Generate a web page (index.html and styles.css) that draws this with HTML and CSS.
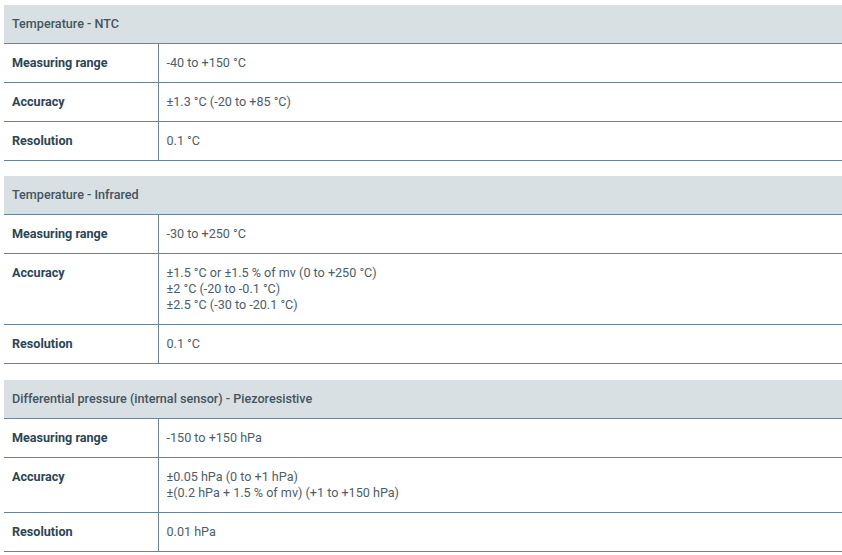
FILE: index.html
```html
<!DOCTYPE html>
<html>
<head>
<meta charset="utf-8">
<link rel="stylesheet" href="styles.css">
</head>
<body>
<div class="specs">
  <table class="spec">
    <colgroup><col class="col-label"><col class="col-value"></colgroup>
    <tr><th class="head" colspan="2">Temperature - NTC</th></tr>
    <tr><td class="label">Measuring range</td><td class="value">-40 to +150 °C</td></tr>
    <tr><td class="label">Accuracy</td><td class="value">±1.3 °C (-20 to +85 °C)</td></tr>
    <tr><td class="label">Resolution</td><td class="value">0.1 °C</td></tr>
  </table>
  <table class="spec">
    <colgroup><col class="col-label"><col class="col-value"></colgroup>
    <tr><th class="head" colspan="2">Temperature - Infrared</th></tr>
    <tr><td class="label">Measuring range</td><td class="value">-30 to +250 °C</td></tr>
    <tr><td class="label">Accuracy</td><td class="value">±1.5 °C or ±1.5 % of mv (0 to +250 °C)<br>±2 °C (-20 to -0.1 °C)<br>±2.5 °C (-30 to -20.1 °C)</td></tr>
    <tr><td class="label">Resolution</td><td class="value">0.1 °C</td></tr>
  </table>
  <table class="spec">
    <colgroup><col class="col-label"><col class="col-value"></colgroup>
    <tr><th class="head" colspan="2">Differential pressure (internal sensor) - Piezoresistive</th></tr>
    <tr><td class="label">Measuring range</td><td class="value">-150 to +150 hPa</td></tr>
    <tr><td class="label">Accuracy</td><td class="value">±0.05 hPa (0 to +1 hPa)<br>±(0.2 hPa + 1.5 % of mv) (+1 to +150 hPa)</td></tr>
    <tr><td class="label">Resolution</td><td class="value">0.01 hPa</td></tr>
  </table>
</div>
</body>
</html>
```
FILE: styles.css
```css
html, body {
  margin: 0;
  padding: 0;
  background: #ffffff;
}
body {
  font-family: Roboto, "Liberation Sans", sans-serif;
  font-size: 12.6px;
  line-height: 16px;
}
.specs {
  padding: 5px 0 0 4px;
  display: flex;
  flex-direction: column;
  gap: 15.4px;
}
.spec {
  width: 838px;
  border-collapse: collapse;
  table-layout: fixed;
}
.col-label {
  width: 154px;
}
.spec td, .spec th {
  border-bottom: 1px solid #6d8592;
  padding: 11px 8px 11px 8px;
  text-align: left;
  vertical-align: top;
}
.head {
  background: #d8e0e3;
  color: #44555e;
  font-weight: 500;
}
.label {
  color: #2c4655;
  font-weight: 700;
  border-right: 1px solid #6d8592;
}
.value {
  color: #4d5e69;
  font-weight: 400;
}
```
